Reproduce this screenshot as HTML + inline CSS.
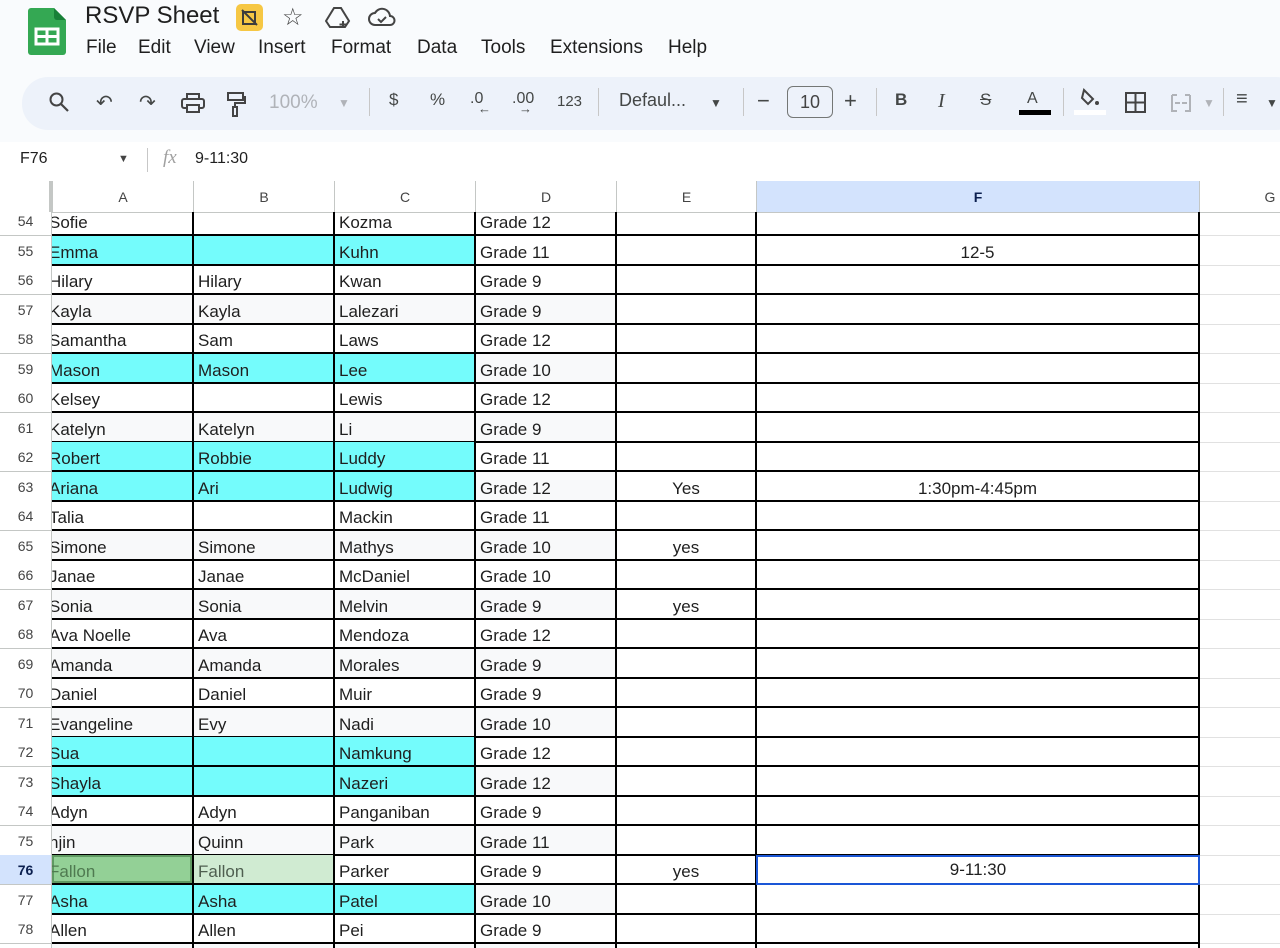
<!DOCTYPE html>
<html><head><meta charset="utf-8"><style>
*{box-sizing:border-box;margin:0;padding:0}
body{width:1280px;height:948px;overflow:hidden;background:#f9fbfd;font-family:"Liberation Sans",Arial,sans-serif;position:relative;color:#1f1f1f}
.abs{position:absolute}
.menu span{position:absolute;top:0}
.tb{position:absolute;top:77px;left:22px;width:1280px;height:53px;background:#edf2fa;border-radius:26px}
.ti{position:absolute;top:90px;font-size:17px;color:#444746}
.sep{position:absolute;top:88px;width:1px;height:28px;background:#c7c7c7}
.grid{position:absolute;left:0;top:181px;width:1280px;height:767px;background:#fff;overflow:hidden}
.row{position:absolute;left:0;height:30px;width:1280px}
.c{position:absolute;top:0;height:30px;border-right:2px solid #000;border-bottom:2px solid #000;font-size:17px;line-height:30px;padding-top:2px;padding-left:4px;white-space:nowrap;overflow:hidden}
.rn{position:absolute;left:0;width:52px;height:30px;text-align:center;font-size:14px;color:#444;line-height:26px;padding-top:2px;background:#fff;border-bottom:1px solid #c4c7c5;border-right:1px solid #c4c7c5}
.a{left:52px;width:142px;padding-left:0;text-indent:-3px}
.b{left:194px;width:141px}
.cc{left:335px;width:141px}
.d{left:476px;width:141px}
.e{left:617px;width:140px;text-align:center;padding-left:0}
.f{left:757px;width:443px;text-align:center;padding-left:0}
.g{left:1200px;width:80px;border-right:none;border-bottom:1px solid #e1e1e1}
.cy{background:#74fcfc}
.bd{background:#f8f9fa}
.hd{position:absolute;top:0;height:32px;border-right:1px solid #c4c7c5;border-bottom:1px solid #c4c7c5;text-align:center;font-size:14px;line-height:32px;color:#444;background:#fff}
</style></head><body>
<svg class="abs" style="left:28px;top:8px" width="38" height="47" viewBox="0 0 38 47"><path d="M3 0h23l12 12v32a3 3 0 0 1-3 3H3a3 3 0 0 1-3-3V3a3 3 0 0 1 3-3z" fill="#34a853"/><path d="M26 0l12 12H29a3 3 0 0 1-3-3z" fill="#188038"/><rect x="8" y="21" width="22" height="15" fill="none" stroke="#fff" stroke-width="3"/><path d="M8 28.5h22M19 21v15" stroke="#fff" stroke-width="3"/></svg>
<div class="abs" style="left:85px;top:2px;font-size:24px;color:#1f1f1f">RSVP Sheet</div>
<div class="abs" style="left:236px;top:4px;width:27px;height:27px;background:#f6c744;border-radius:5px"></div>
<svg class="abs" style="left:240px;top:8px" width="19" height="19" viewBox="0 0 19 19"><path d="M2 2l15 15M3 16V4h12v12z" stroke="#3c3c3c" stroke-width="2" fill="none"/></svg>
<div class="abs" style="left:282px;top:3px;font-size:24px;color:#444">☆</div>
<svg class="abs" style="left:325px;top:6px" width="26" height="24" viewBox="0 0 26 24"><path d="M9 2h7l8 13-4 6H5L1 15z" fill="none" stroke="#444" stroke-width="2"/><path d="M18 15v7M14.5 18.5h7" stroke="#444" stroke-width="2"/></svg>
<svg class="abs" style="left:368px;top:7px" width="28" height="20" viewBox="0 0 28 20"><path d="M7 18a6 6 0 0 1 0-12 8 8 0 0 1 15 3 4.5 4.5 0 0 1 0 9z" fill="none" stroke="#444" stroke-width="2"/><path d="M10 12l3 3 5-5" fill="none" stroke="#444" stroke-width="2"/></svg>
<div class="abs menu" style="left:0;top:37px;font-size:19px;color:#1f1f1f"><span style="left:86px">File</span><span style="left:138px">Edit</span><span style="left:194px">View</span><span style="left:258px">Insert</span><span style="left:331px">Format</span><span style="left:417px">Data</span><span style="left:481px">Tools</span><span style="left:550px">Extensions</span><span style="left:668px">Help</span></div>
<div class="tb"></div>
<svg class="abs" style="left:48px;top:91px" width="22" height="22" viewBox="0 0 22 22"><circle cx="8.5" cy="8.5" r="6" fill="none" stroke="#444" stroke-width="2"/><path d="M13 13l7 7" stroke="#444" stroke-width="2.2"/></svg>
<div class="ti" style="left:96px;font-size:20px">↶</div>
<div class="ti" style="left:139px;font-size:20px">↷</div>
<svg class="abs" style="left:181px;top:93px" width="24" height="20" viewBox="0 0 24 20"><rect x="6" y="1" width="12" height="5" fill="none" stroke="#444" stroke-width="2"/><rect x="1" y="6" width="22" height="9" rx="2" fill="none" stroke="#444" stroke-width="2"/><rect x="6" y="12" width="12" height="7" fill="#edf2fa" stroke="#444" stroke-width="2"/></svg>
<svg class="abs" style="left:226px;top:91px" width="20" height="26" viewBox="0 0 20 26"><rect x="2" y="2" width="15" height="7" fill="none" stroke="#444" stroke-width="2"/><path d="M17 6h2v6H9v4" fill="none" stroke="#444" stroke-width="2"/><rect x="7" y="16" width="4" height="9" fill="none" stroke="#444" stroke-width="2"/></svg>
<div class="ti" style="left:269px;color:#b0b3b8;font-size:19px;top:92px">100%</div>
<div class="ti" style="left:338px;color:#b0b3b8;font-size:12px;top:96px">▼</div>
<div class="sep" style="left:369px"></div>
<div class="ti" style="left:389px">$</div>
<div class="ti" style="left:430px">%</div>
<div class="ti" style="left:470px;font-size:16px">.0<span style="position:absolute;left:8px;top:11px;font-size:13px">←</span></div>
<div class="ti" style="left:512px;font-size:16px">.00<span style="position:absolute;left:7px;top:11px;font-size:13px">→</span></div>
<div class="ti" style="left:557px;font-size:15px;top:93px">123</div>
<div class="sep" style="left:598px"></div>
<div class="ti" style="left:619px;font-size:18px">Defaul...</div>
<div class="ti" style="left:710px;font-size:12px;top:96px">▼</div>
<div class="sep" style="left:743px"></div>
<div class="ti" style="left:757px;font-size:22px;top:88px">−</div>
<div class="abs" style="left:787px;top:86px;width:46px;height:32px;border:1px solid #747775;border-radius:6px;text-align:center;line-height:30px;font-size:18px;color:#444">10</div>
<div class="ti" style="left:844px;font-size:22px;top:88px">+</div>
<div class="sep" style="left:876px"></div>
<div class="ti" style="left:895px;font-weight:bold">B</div>
<div class="ti" style="left:938px;font-style:italic;font-family:'Liberation Serif',serif;font-size:20px">I</div>
<div class="ti" style="left:980px;text-decoration:line-through">S</div>
<div class="ti" style="left:1027px;font-size:16px">A</div>
<div class="abs" style="left:1019px;top:110px;width:32px;height:5px;background:#000"></div>
<div class="sep" style="left:1063px"></div>
<svg class="abs" style="left:1079px;top:88px" width="22" height="20" viewBox="0 0 22 20"><path d="M5 2l9 9-5 5-6-6z" fill="none" stroke="#444" stroke-width="2"/><circle cx="18" cy="15" r="2" fill="#444"/></svg>
<div class="abs" style="left:1074px;top:110px;width:32px;height:5px;background:#fff"></div>
<svg class="abs" style="left:1125px;top:92px" width="21" height="21" viewBox="0 0 21 21"><rect x="1" y="1" width="19" height="19" fill="none" stroke="#444" stroke-width="2"/><path d="M10.5 1v19M1 10.5h19" stroke="#444" stroke-width="2"/></svg>
<svg class="abs" style="left:1170px;top:93px" width="22" height="20" viewBox="0 0 22 20"><path d="M2 2h5M2 2v16h5M20 2h-5M20 2v16h-5M5 10h5M12 10h5" stroke="#b0b3b8" stroke-width="2" fill="none"/></svg>
<div class="ti" style="left:1203px;color:#b0b3b8;font-size:12px;top:96px">▼</div>
<div class="sep" style="left:1223px"></div>
<div class="ti" style="left:1236px;font-size:20px;top:88px">≡</div>
<div class="ti" style="left:1266px;font-size:12px;top:96px">▼</div>
<div class="abs" style="left:0;top:142px;width:1280px;height:39px;background:#fff"></div>
<div class="abs" style="left:20px;top:150px;font-size:16px">F76</div>
<div class="abs" style="left:118px;top:153px;font-size:11px;color:#444">▼</div>
<div class="abs" style="left:147px;top:148px;width:1px;height:24px;background:#c7c7c7"></div>
<div class="abs" style="left:163px;top:147px;font-size:19px;font-style:italic;color:#a0a0a0;font-family:'Liberation Serif',serif">fx</div>
<div class="abs" style="left:195px;top:150px;font-size:16px">9-11:30</div>

<div class="grid">
<div class="hd" style="left:0;width:53px;border-right:4px solid #c4c7c5"></div>
<div class="hd" style="left:53px;width:141px">A</div>
<div class="hd" style="left:194px;width:141px">B</div>
<div class="hd" style="left:335px;width:141px">C</div>
<div class="hd" style="left:476px;width:141px">D</div>
<div class="hd" style="left:617px;width:140px">E</div>
<div class="hd" style="left:757px;width:443px;background:#d3e3fd;color:#0b1f4f;font-weight:bold">F</div>
<div class="hd" style="left:1200px;width:140px;border-right:none">G</div>
</div>

<div class="abs" style="left:0;top:206px;width:1280px;height:742px;overflow:hidden;clip-path:inset(6px 0 0 0)">
<div class="row" style="top:0"><div class="rn">54</div><div class="c a">Sofie</div><div class="c b"></div><div class="c cc">Kozma</div><div class="c d">Grade 12</div><div class="c e"></div><div class="c f"></div><div class="c g"></div></div>
<div class="row" style="top:29.5px"><div class="rn">55</div><div class="c a cy">Emma</div><div class="c b cy"></div><div class="c cc cy">Kuhn</div><div class="c d">Grade 11</div><div class="c e"></div><div class="c f">12-5</div><div class="c g"></div></div>
<div class="row" style="top:59px"><div class="rn">56</div><div class="c a">Hilary</div><div class="c b">Hilary</div><div class="c cc">Kwan</div><div class="c d">Grade 9</div><div class="c e"></div><div class="c f"></div><div class="c g"></div></div>
<div class="row" style="top:88.5px"><div class="rn">57</div><div class="c a bd">Kayla</div><div class="c b bd">Kayla</div><div class="c cc bd">Lalezari</div><div class="c d bd">Grade 9</div><div class="c e"></div><div class="c f"></div><div class="c g"></div></div>
<div class="row" style="top:118px"><div class="rn">58</div><div class="c a">Samantha</div><div class="c b">Sam</div><div class="c cc">Laws</div><div class="c d">Grade 12</div><div class="c e"></div><div class="c f"></div><div class="c g"></div></div>
<div class="row" style="top:147.5px"><div class="rn">59</div><div class="c a cy">Mason</div><div class="c b cy">Mason</div><div class="c cc cy">Lee</div><div class="c d bd">Grade 10</div><div class="c e"></div><div class="c f"></div><div class="c g"></div></div>
<div class="row" style="top:177px"><div class="rn">60</div><div class="c a">Kelsey</div><div class="c b"></div><div class="c cc">Lewis</div><div class="c d">Grade 12</div><div class="c e"></div><div class="c f"></div><div class="c g"></div></div>
<div class="row" style="top:206.5px"><div class="rn">61</div><div class="c a bd">Katelyn</div><div class="c b bd">Katelyn</div><div class="c cc bd">Li</div><div class="c d bd">Grade 9</div><div class="c e"></div><div class="c f"></div><div class="c g"></div></div>
<div class="row" style="top:236px"><div class="rn">62</div><div class="c a cy">Robert</div><div class="c b cy">Robbie</div><div class="c cc cy">Luddy</div><div class="c d">Grade 11</div><div class="c e"></div><div class="c f"></div><div class="c g"></div></div>
<div class="row" style="top:265.5px"><div class="rn">63</div><div class="c a cy">Ariana</div><div class="c b cy">Ari</div><div class="c cc cy">Ludwig</div><div class="c d bd">Grade 12</div><div class="c e">Yes</div><div class="c f">1:30pm-4:45pm</div><div class="c g"></div></div>
<div class="row" style="top:295px"><div class="rn">64</div><div class="c a">Talia</div><div class="c b"></div><div class="c cc">Mackin</div><div class="c d">Grade 11</div><div class="c e"></div><div class="c f"></div><div class="c g"></div></div>
<div class="row" style="top:324.5px"><div class="rn">65</div><div class="c a bd">Simone</div><div class="c b bd">Simone</div><div class="c cc bd">Mathys</div><div class="c d bd">Grade 10</div><div class="c e">yes</div><div class="c f"></div><div class="c g"></div></div>
<div class="row" style="top:354px"><div class="rn">66</div><div class="c a">Janae</div><div class="c b">Janae</div><div class="c cc">McDaniel</div><div class="c d">Grade 10</div><div class="c e"></div><div class="c f"></div><div class="c g"></div></div>
<div class="row" style="top:383.5px"><div class="rn">67</div><div class="c a bd">Sonia</div><div class="c b bd">Sonia</div><div class="c cc bd">Melvin</div><div class="c d bd">Grade 9</div><div class="c e">yes</div><div class="c f"></div><div class="c g"></div></div>
<div class="row" style="top:413px"><div class="rn">68</div><div class="c a">Ava Noelle</div><div class="c b">Ava</div><div class="c cc">Mendoza</div><div class="c d">Grade 12</div><div class="c e"></div><div class="c f"></div><div class="c g"></div></div>
<div class="row" style="top:442.5px"><div class="rn">69</div><div class="c a bd">Amanda</div><div class="c b bd">Amanda</div><div class="c cc bd">Morales</div><div class="c d bd">Grade 9</div><div class="c e"></div><div class="c f"></div><div class="c g"></div></div>
<div class="row" style="top:472px"><div class="rn">70</div><div class="c a">Daniel</div><div class="c b">Daniel</div><div class="c cc">Muir</div><div class="c d">Grade 9</div><div class="c e"></div><div class="c f"></div><div class="c g"></div></div>
<div class="row" style="top:501.5px"><div class="rn">71</div><div class="c a bd">Evangeline</div><div class="c b bd">Evy</div><div class="c cc bd">Nadi</div><div class="c d bd">Grade 10</div><div class="c e"></div><div class="c f"></div><div class="c g"></div></div>
<div class="row" style="top:531px"><div class="rn">72</div><div class="c a cy">Sua</div><div class="c b cy"></div><div class="c cc cy">Namkung</div><div class="c d">Grade 12</div><div class="c e"></div><div class="c f"></div><div class="c g"></div></div>
<div class="row" style="top:560.5px"><div class="rn">73</div><div class="c a cy">Shayla</div><div class="c b cy"></div><div class="c cc cy">Nazeri</div><div class="c d bd">Grade 12</div><div class="c e"></div><div class="c f"></div><div class="c g"></div></div>
<div class="row" style="top:590px"><div class="rn">74</div><div class="c a">Adyn</div><div class="c b">Adyn</div><div class="c cc">Panganiban</div><div class="c d">Grade 9</div><div class="c e"></div><div class="c f"></div><div class="c g"></div></div>
<div class="row" style="top:619.5px"><div class="rn">75</div><div class="c a bd">njin</div><div class="c b bd">Quinn</div><div class="c cc bd">Park</div><div class="c d bd">Grade 11</div><div class="c e"></div><div class="c f"></div><div class="c g"></div></div>
<div class="row" style="top:649px"><div class="rn" style="background:#d3e3fd;color:#0b1f4f;font-weight:bold">76</div><div class="c a" style="background:#93d096;color:#4f7a50;box-shadow:inset 0 0 0 2px #5f9a62">Fallon</div><div class="c b" style="background:#d0ebd2;color:#4f5f50">Fallon</div><div class="c cc">Parker</div><div class="c d">Grade 9</div><div class="c e">yes</div><div class="c f" style="line-height:22px;border:2px solid #1a56d6;left:756px;width:444px">9-11:30</div><div class="c g"></div></div>
<div class="row" style="top:678.5px"><div class="rn">77</div><div class="c a cy">Asha</div><div class="c b cy">Asha</div><div class="c cc cy">Patel</div><div class="c d bd">Grade 10</div><div class="c e"></div><div class="c f"></div><div class="c g"></div></div>
<div class="row" style="top:708px"><div class="rn">78</div><div class="c a">Allen</div><div class="c b">Allen</div><div class="c cc">Pei</div><div class="c d">Grade 9</div><div class="c e"></div><div class="c f"></div><div class="c g"></div></div>
<div class="row" style="top:737.5px"><div class="rn"></div><div class="c a bd"></div><div class="c b bd"></div><div class="c cc bd"></div><div class="c d bd"></div><div class="c e"></div><div class="c f"></div><div class="c g"></div></div>
</div>
</body></html>
